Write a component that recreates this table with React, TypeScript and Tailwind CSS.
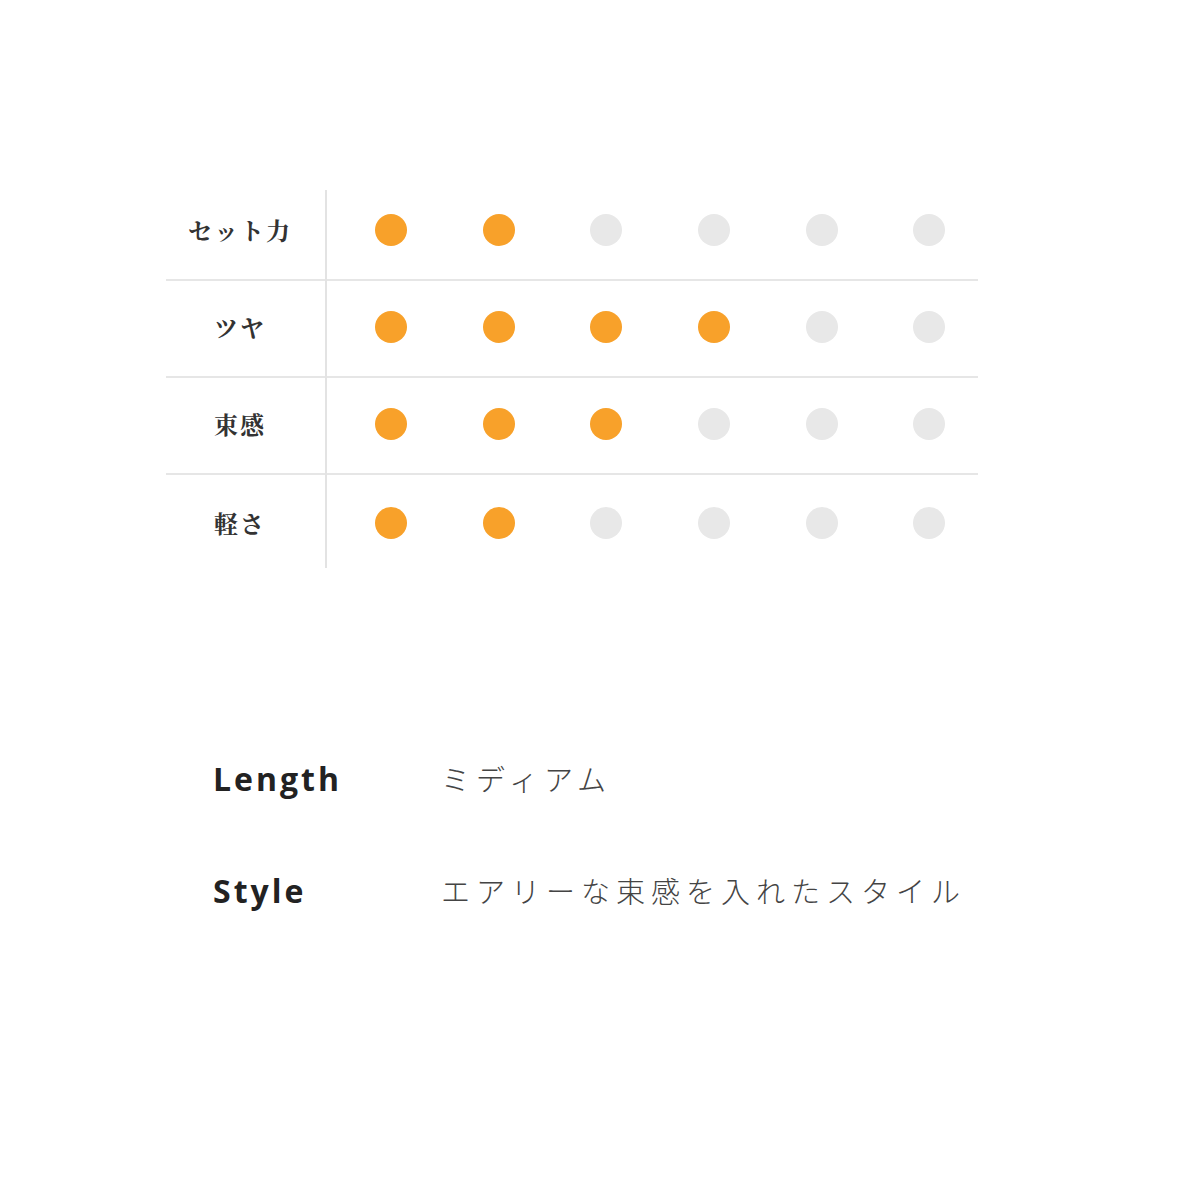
import React from "react";

const rows = [
    { label: "セット力", score: 2 },
    { label: "ツヤ", score: 4 },
    { label: "束感", score: 3 },
    { label: "軽さ", score: 2 },
];

const specs = [
    { name: "Length", value: "ミディアム" },
    { name: "Style", value: "エアリーな束感を入れたスタイル" },
];

const jpSerif = "font-['Noto_Serif_CJK_JP','Noto_Sans_CJK_JP',serif]";

export default function App() {
    return (
        <div className="w-[1200px] h-[1200px] bg-white">
            <div className="flex w-[812px] ml-[166px] pt-[184px]">
                <div className="w-[159px]">
                    {rows.map((row, i) => (
                        <div
                            key={row.label}
                            className={
                                i < rows.length - 1
                                    ? "h-[97px] border-b-2 border-[#e6e6e6] flex items-center justify-center pr-[11px] pb-[3px]"
                                    : "h-[95px] flex items-center justify-center pr-[11px]"
                            }
                        >
                            <span
                                className={`${jpSerif} text-[24px] font-bold tracking-[2px] text-[#333333]`}
                            >
                                {row.label}
                            </span>
                        </div>
                    ))}
                </div>

                <div className="w-[2px] bg-[#e3e3e3] mt-[6px] mb-[2px]" />

                <div className="flex-1">
                    {rows.map((row, i) => (
                        <div
                            key={row.label}
                            className={
                                i < rows.length - 1
                                    ? "h-[97px] border-b-2 border-[#e6e6e6] flex items-center gap-[75.7px] pl-[48px] pb-[3px]"
                                    : "h-[95px] flex items-center gap-[75.7px] pl-[48px]"
                            }
                        >
                            {[0, 1, 2, 3, 4, 5].map((n) => (
                                <span
                                    key={n}
                                    className={
                                        n < row.score
                                            ? "w-8 h-8 rounded-full bg-[#f8a12a] shrink-0"
                                            : "w-8 h-8 rounded-full bg-[#e8e8e8] shrink-0"
                                    }
                                />
                            ))}
                        </div>
                    ))}
                </div>
            </div>

            <div className="ml-[213px] mt-[189px] flex flex-col gap-[72px]">
                {specs.map((spec) => (
                    <div key={spec.name} className="flex items-center h-[40px]">
                        <span className="w-[228px] font-['Open_Sans',sans-serif] text-[32px] font-bold tracking-[3px] text-[#222222]">
                            {spec.name}
                        </span>
                        <span className="font-['Noto_Sans_CJK_JP',sans-serif] font-light text-[29px] tracking-[6px] text-[#444444]">
                            {spec.value}
                        </span>
                    </div>
                ))}
            </div>
        </div>
    );
}
